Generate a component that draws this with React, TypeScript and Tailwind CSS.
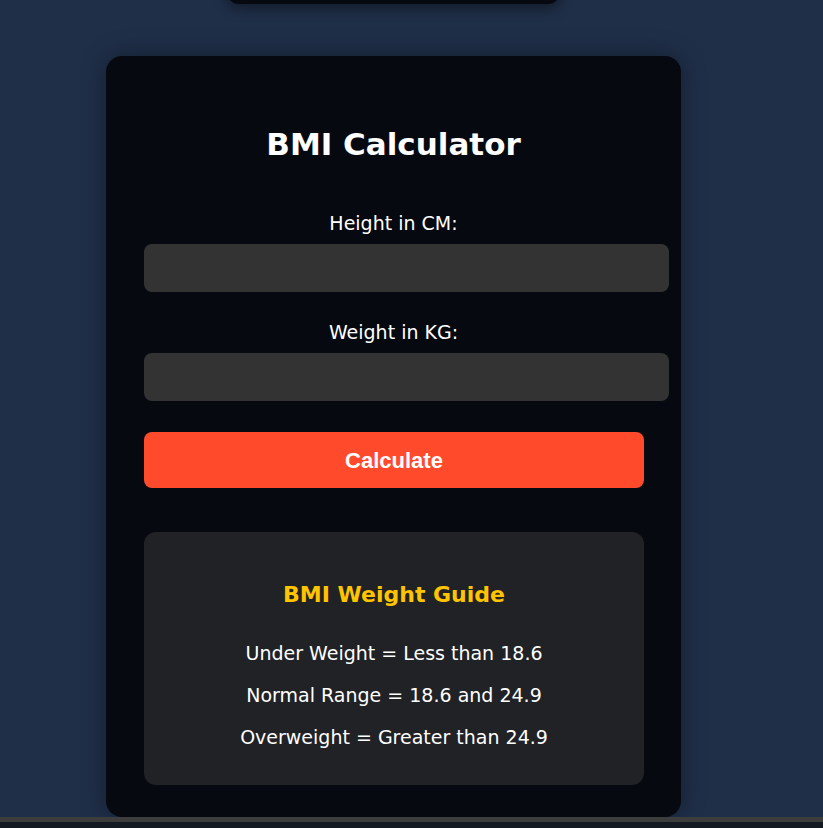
import React, { useState } from 'react';

const guide = [
  'Under Weight = Less than 18.6',
  'Normal Range = 18.6 and 24.9',
  'Overweight = Greater than 24.9',
];

export default function App() {
  const [height, setHeight] = useState('');
  const [weight, setWeight] = useState('');

  return (
    <div
      className="relative min-h-screen h-[828px] overflow-hidden bg-[#1f2f48] pr-[36px] flex flex-col items-center"
      style={{ fontFamily: '"DejaVu Sans", "Noto Sans", sans-serif' }}
    >
      {/* bottom of the element above, cut off by the viewport */}
      <div className="mt-[-20px] h-[24px] w-[333px] rounded-xl bg-[#06090f] shadow-[0_4px_14px_rgba(0,0,0,0.45)]" />

      <div className="mt-[52px] w-[575px] rounded-2xl bg-[#06090f] px-[38px] pt-[64px] pb-[32px] shadow-[0_0_24px_rgba(0,0,0,0.35)]">
        <h1 className="text-center text-[31px] leading-[48px] font-bold text-white">
          BMI Calculator
        </h1>

        <label className="mt-[42px] block text-center text-[19px] leading-[27px] text-white">
          Height in CM:
        </label>
        <input
          value={height}
          onChange={(e) => setHeight(e.target.value)}
          className="mt-[7px] block h-[48px] w-[525px] rounded-lg bg-[#333333] px-3 text-white outline-none"
        />

        <label className="mt-[27px] block text-center text-[19px] leading-[27px] text-white">
          Weight in KG:
        </label>
        <input
          value={weight}
          onChange={(e) => setWeight(e.target.value)}
          className="mt-[7px] block h-[48px] w-[525px] rounded-lg bg-[#333333] px-3 text-white outline-none"
        />

        <button
          className="mt-[31px] block h-[56px] w-[500px] rounded-lg bg-[#ff4b2b] text-[22px] font-bold text-white"
          style={{ fontFamily: '"Liberation Sans", Arial, sans-serif' }}
        >
          Calculate
        </button>

        <div className="mt-[44px] w-[500px] rounded-xl bg-[#202226] pt-[46px] pb-[34px] text-center">
          <h2 className="text-[22px] leading-[33px] font-bold text-[#ffc400]">BMI Weight Guide</h2>
          <div className="mt-[29px] flex flex-col gap-[15px]">
            {guide.map((line) => (
              <p key={line} className="text-[19px] leading-[27px] text-white">
                {line}
              </p>
            ))}
          </div>
        </div>
      </div>

      {/* taskbar strip over the page */}
      <div className="absolute bottom-0 left-0 right-0 h-[11px] border-t-[5px] border-[#3d3d3d] bg-[#141a22]" />
    </div>
  );
}
